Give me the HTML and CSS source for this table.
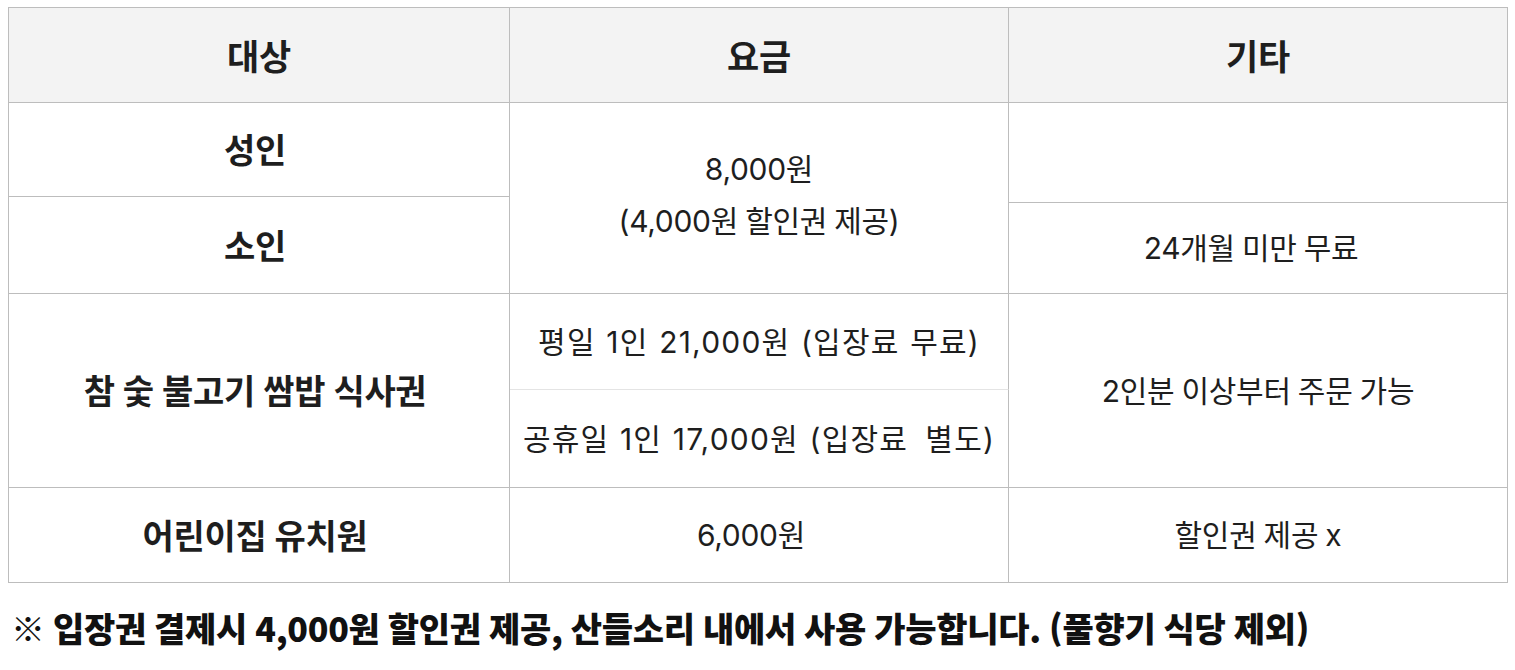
FILE: index.html
```html
<!DOCTYPE html>
<html lang="ko">
<head>
<meta charset="utf-8">
<title>요금 안내</title>
<link rel="stylesheet" href="styles.css">
</head>
<body>
<div class="page">
  <div class="price-table">
    <div class="cell head c1">대상</div>
    <div class="cell head c2">요금</div>
    <div class="cell head c3">기타</div>

    <div class="cell label c1 r-adult">성인</div>
    <div class="cell c2 r-fee">
      <span>8,000원</span>
      <span>(4,000원 할인권 제공)</span>
    </div>
    <div class="cell c3 r-empty"></div>
    <div class="cell label c1 r-child">소인</div>
    <div class="cell c3 r-infant">24개월 미만 무료</div>

    <div class="cell label c1 r-meal">참 숯 불고기 쌈밥 식사권</div>
    <div class="cell c2 r-weekday wide light-bottom">평일 1인 21,000원 (입장료 무료)</div>
    <div class="cell c2 r-holiday wide">공휴일 1인 17,000원 (입장료 &#8201;별도)</div>
    <div class="cell c3 r-meal">2인분 이상부터 주문 가능</div>

    <div class="cell label c1 r-kids">어린이집 유치원</div>
    <div class="cell c2 r-kids shift">6,000원</div>
    <div class="cell c3 r-kids">할인권 제공 x</div>
  </div>
  <p class="note">※ 입장권 결제시 4,000원 할인권 제공, 산들소리 내에서 사용 가능합니다. (풀향기 식당 제외)</p>
</div>
</body>
</html>
```

FILE: styles.css
```css
html, body {
  margin: 0;
  padding: 0;
  background: #ffffff;
}

body {
  font-family: "Noto Sans CJK KR", "Noto Sans", sans-serif;
  color: #1e1e1e;
}

.page {
  padding: 7px 0 0 8px;
}

.price-table {
  display: grid;
  width: 1500px;
  box-sizing: border-box;
  grid-template-columns: 501px 499px 499px;
  grid-template-rows: 95px 94px 6px 91px 96px 98px 95px;
  border-left: 1px solid #bdbdbd;
  border-top: 1px solid #bdbdbd;
}

.cell {
  box-sizing: border-box;
  border-right: 1px solid #bdbdbd;
  border-bottom: 1px solid #bdbdbd;
  display: flex;
  flex-direction: column;
  align-items: center;
  justify-content: center;
  text-align: center;
  font-family: Inter, "Noto Sans CJK KR", sans-serif;
  font-weight: 400;
  font-size: 30px;
  line-height: 1.2;
  white-space: nowrap;
  letter-spacing: -0.3px;
  word-spacing: -1px;
}

.head {
  background: #f3f3f3;
  font-family: "Noto Sans CJK KR", sans-serif;
  font-weight: 700;
  font-size: 35px;
  grid-row: 1 / 2;
}

.label {
  font-family: "Noto Sans CJK KR", sans-serif;
  font-weight: 700;
  font-size: 34px;
  word-spacing: -1px;
  padding-right: 8px;
}

.wide {
  letter-spacing: 1.2px;
  word-spacing: 1px;
}

.shift {
  padding-right: 16px;
}

.c1 { grid-column: 1 / 2; }
.c2 { grid-column: 2 / 3; }
.c3 { grid-column: 3 / 4; }

.r-adult { grid-row: 2 / 3; }
.r-child { grid-row: 3 / 5; }
.r-fee { grid-row: 2 / 5; padding-bottom: 6px; }
.r-fee span { line-height: 52px; }
.r-empty { grid-row: 2 / 4; }
.r-infant { grid-row: 4 / 5; padding-right: 14px; }
.r-meal { grid-row: 5 / 7; }
.r-weekday { grid-row: 5 / 6; }
.r-holiday { grid-row: 6 / 7; }
.r-kids { grid-row: 7 / 8; }

.light-bottom {
  border-bottom-color: #e4e4e4;
}

.note {
  margin: 20px 0 0 3px;
  font-size: 34px;
  font-weight: 900;
  color: #111111;
  letter-spacing: -0.3px;
  word-spacing: -1px;
  white-space: nowrap;
}
```
